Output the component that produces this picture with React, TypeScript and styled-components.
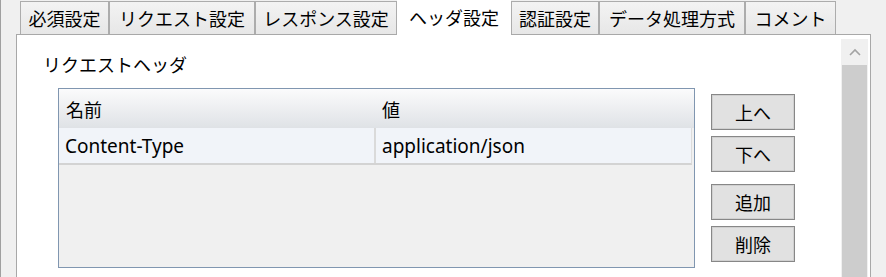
import styled, { createGlobalStyle } from 'styled-components';

const GlobalStyle = createGlobalStyle`
  html, body {
    margin: 0;
    padding: 0;
    background: #f0f0f0;
  }
  body {
    font-family: "Noto Sans", "Noto Sans CJK JP", sans-serif;
    color: #000;
  }
`;

interface TabInfo {
  label: string;
  width: number;
  active?: boolean;
}

const tabs: TabInfo[] = [
  { label: '必須設定', width: 89 },
  { label: 'リクエスト設定', width: 146 },
  { label: 'レスポンス設定', width: 142 },
  { label: 'ヘッダ設定', width: 114, active: true },
  { label: '認証設定', width: 88 },
  { label: 'データ処理方式', width: 146 },
  { label: 'コメント', width: 91 },
];

const headers = [{ name: 'Content-Type', value: 'application/json' }];

function App() {
  return (
    <>
      <GlobalStyle />
      <Window>
        <TabStrip>
          {tabs.map((tab) => (
            <Tab key={tab.label} $width={tab.width} $active={tab.active}>
              {tab.label}
            </Tab>
          ))}
        </TabStrip>
        <Panel>
          <Content>
            <SectionLabel>リクエストヘッダ</SectionLabel>
            <Body>
              <Table>
                <HeaderRow>
                  <HeaderCell $first>名前</HeaderCell>
                  <HeaderCell>値</HeaderCell>
                </HeaderRow>
                {headers.map((h) => (
                  <DataRow key={h.name}>
                    <DataCell $first>{h.name}</DataCell>
                    <DataCell>{h.value}</DataCell>
                  </DataRow>
                ))}
              </Table>
              <Buttons>
                <ButtonGroup>
                  <Button>上へ</Button>
                  <Button>下へ</Button>
                </ButtonGroup>
                <ButtonGroup>
                  <Button>追加</Button>
                  <Button>削除</Button>
                </ButtonGroup>
              </Buttons>
            </Body>
          </Content>
          <ScrollBar>
            <ScrollArrow>
              <svg width="12" height="8" viewBox="0 0 12 8">
                <path d="M1 7 L6 2 L11 7" fill="none" stroke="#a3a3a3" strokeWidth="1.6" />
              </svg>
            </ScrollArrow>
            <ScrollThumb />
          </ScrollBar>
        </Panel>
      </Window>
    </>
  );
}

const Window = styled.div`
  height: 277px;
  box-sizing: border-box;
  overflow: hidden;
  border-left: 1px solid #a0a0a0;
  padding-left: 15px;
  display: flex;
  flex-direction: column;
`;

const TabStrip = styled.div`
  display: flex;
  padding-top: 1px;
  padding-left: 4px;
  height: 34px;
  box-sizing: border-box;
  position: relative;
  z-index: 1;
`;

const Tab = styled.div<{ $width: number; $active?: boolean }>`
  width: ${(p) => p.$width}px;
  box-sizing: border-box;
  display: flex;
  align-items: center;
  justify-content: center;
  font-size: 18px;
  white-space: nowrap;
  border: 1px solid ${(p) => (p.$active ? '#ffffff' : '#acacac')};
  border-bottom: none;
  background: ${(p) =>
    p.$active ? '#ffffff' : 'linear-gradient(#f3f3f3, #e7e7e7)'};
  margin-top: ${(p) => (p.$active ? '-1px' : '0')};
  height: ${(p) => (p.$active ? '35px' : '33px')};
  padding-bottom: ${(p) => (p.$active ? '2px' : '0')};
`;

const Panel = styled.div`
  flex: 1;
  min-height: 0;
  width: 855px;
  box-sizing: border-box;
  background: #ffffff;
  border: 1px solid #a8a8a8;
  border-bottom: none;
  display: flex;
`;

const Content = styled.div`
  flex: 1;
  padding: 18px 0 0 26px;
`;

const SectionLabel = styled.div`
  font-size: 18px;
  line-height: 24px;
  margin-bottom: 11px;
`;

const Body = styled.div`
  display: flex;
  padding-left: 15px;
`;

const Table = styled.div`
  width: 637px;
  height: 180px;
  box-sizing: border-box;
  border: 1px solid #8096b0;
  background: #f0f0f0;
`;

const HeaderRow = styled.div`
  display: flex;
  height: 39px;
  background: linear-gradient(#fbfbfc, #dfe2e6);
`;

const HeaderCell = styled.div<{ $first?: boolean }>`
  box-sizing: border-box;
  width: ${(p) => (p.$first ? '317px' : 'auto')};
  flex: ${(p) => (p.$first ? 'none' : '1')};
  padding-left: ${(p) => (p.$first ? '7px' : '6px')};
  display: flex;
  align-items: center;
  font-size: 18px;
`;

const DataRow = styled.div`
  display: flex;
  height: 37px;
  margin-right: 2px;
  box-sizing: border-box;
  background: #f1f4f9;
  border-bottom: 2px solid #d3d3d3;
  border-right: 1px solid #dcdcdc;
`;

const DataCell = styled.div<{ $first?: boolean }>`
  box-sizing: border-box;
  width: ${(p) => (p.$first ? '317px' : 'auto')};
  flex: ${(p) => (p.$first ? 'none' : '1')};
  padding-left: 6px;
  border-right: ${(p) => (p.$first ? '2px solid #dadada' : 'none')};
  display: flex;
  align-items: center;
  font-size: 19px;
`;

const Buttons = styled.div`
  display: flex;
  flex-direction: column;
  gap: 12px;
  margin: 6px 0 0 16px;
`;

const ButtonGroup = styled.div`
  display: flex;
  flex-direction: column;
  gap: 6px;
`;

const Button = styled.div`
  width: 84px;
  height: 36px;
  box-sizing: border-box;
  border: 1px solid #878787;
  box-shadow: inset 0 0 0 1px #d0d0d0;
  background: #e1e1e1;
  display: flex;
  align-items: center;
  justify-content: center;
  font-size: 18px;
`;

const ScrollBar = styled.div`
  width: 27px;
  margin: 4px 2px 0 0;
  display: flex;
  flex-direction: column;
  background: #f0f0f0;
`;

const ScrollArrow = styled.div`
  height: 26px;
  display: flex;
  align-items: center;
  justify-content: center;
`;

const ScrollThumb = styled.div`
  flex: 1;
  margin: 0 1px 0 1px;
  background: #cdcdcd;
`;

export default App;
